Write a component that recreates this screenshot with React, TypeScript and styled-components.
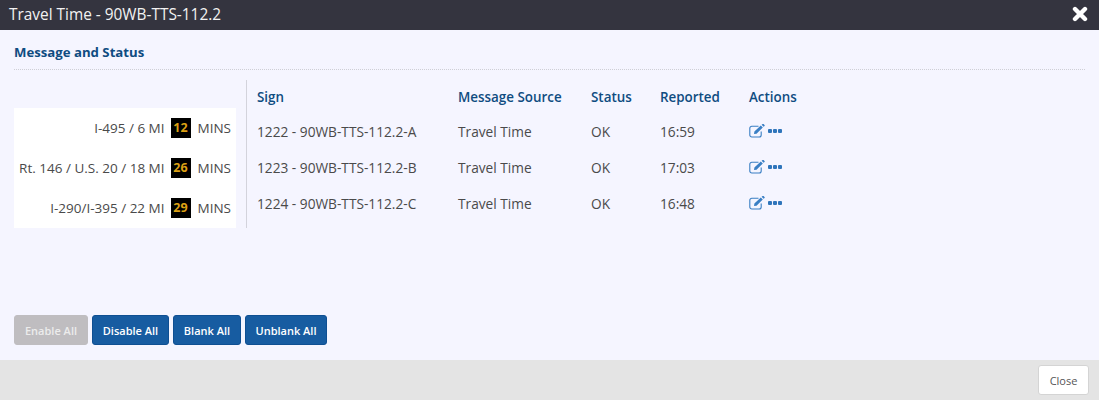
import React from "react";
import styled, { createGlobalStyle } from "styled-components";

const Global = createGlobalStyle`
  html, body { margin: 0; padding: 0; background: #f5f5ff; }
  body { font-family: "Open Sans", "Noto Sans", sans-serif; }
`;

const Modal = styled.div`
  width: 1099px;
  height: 400px;
  display: flex;
  flex-direction: column;
  overflow: hidden;
`;
const Header = styled.header`
  height: 30px;
  flex: none;
  background: #34343f;
  display: flex;
  align-items: center;
  justify-content: space-between;
  padding: 0 11px 0 9px;
  color: #f2f2f2;
  font-size: 15.4px;
  line-height: 30px;
`;
const CloseIcon = styled.svg`
  width: 16px;
  height: 16px;
  margin-bottom: 3px;
  color: #fff;
`;
const Body = styled.main`
  flex: 1;
  background: #f5f5ff;
  padding: 14px 14px 15px;
  display: flex;
  flex-direction: column;
`;
const SectionTitle = styled.h2`
  margin: 0;
  height: 25px;
  font-size: 13.2px;
  line-height: 17px;
  font-weight: 700;
  color: #0f4c81;
  border-bottom: 1px dotted #cfcfd6;
`;
const Content = styled.div`
  display: flex;
  margin-top: 10px;
  flex: 1;
  align-items: flex-start;
`;
const SignColumn = styled.div`
  width: 222px;
  margin-top: 28px;
  height: 120px;
  background: #fff;
  display: flex;
  flex-direction: column;
  justify-content: space-between;
`;
const SignLine = styled.div`
  height: 40px;
  display: flex;
  align-items: center;
  justify-content: flex-end;
  padding-right: 5px;
  font-size: 13.5px;
  color: #4a4a4a;
  white-space: nowrap;
`;
const Minutes = styled.span`
  width: 20px;
  height: 20px;
  margin: 0 7px 0 6px;
  background: #000;
  color: #dca114;
  font-weight: 700;
  font-size: 12.5px;
  line-height: 20px;
  text-align: center;
`;
const TableWrap = styled.div`
  margin-left: 10px;
  height: 148px;
  border-left: 1px solid #d3d3dc;
`;
const Table = styled.table`
  border-collapse: collapse;
  table-layout: fixed;
  width: 570px;
  font-size: 13.7px;
  color: #4a4a4a;
`;
const HeadCell = styled.th<{ $w: number }>`
  width: ${(p) => p.$w}px;
  height: 34px;
  padding: 0 0 0 10px;
  text-align: left;
  font-weight: 600;
  font-size: 13.4px;
  color: #0f4c81;
  box-sizing: border-box;
`;
const Cell = styled.td`
  height: 36px;
  box-sizing: border-box;
  padding: 0 0 2px 10px;
  white-space: nowrap;
`;
const Actions = styled.div`
  display: flex;
  align-items: center;
  gap: 3px;
  color: #3a7fc4;
`;
const EditIcon = styled.svg`
  width: 16px;
  height: 14px;
`;
const MoreIcon = styled.svg`
  width: 14px;
  height: 4px;
  margin-bottom: 1px;
  color: #2f75bb;
`;
const ButtonRow = styled.div`
  display: flex;
  gap: 4px;
`;
const Button = styled.button<{ $disabled?: boolean; $w: number }>`
  height: 30px;
  padding: 0;
  width: ${(p) => p.$w}px;
  border-radius: 3px;
  border: 1px solid ${(p) => (p.$disabled ? "#bfbdc0" : "#0f4f92")};
  background: ${(p) => (p.$disabled ? "#bfbdc0" : "#175ca1")};
  color: ${(p) => (p.$disabled ? "#ececec" : "#fff")};
  font-family: inherit;
  font-size: 11px;
  font-weight: 600;
`;
const Footer = styled.footer`
  height: 40px;
  flex: none;
  background: #e4e4e4;
  display: flex;
  justify-content: flex-end;
  align-items: center;
  padding: 0 10px;
`;
const CloseButton = styled.button`
  width: 51px;
  height: 30px;
  background: #fff;
  border: 1px solid #d4d4d4;
  border-radius: 3px;
  color: #555;
  font-family: inherit;
  font-size: 11px;
  padding: 0;
`;

const rows = [
  { label: "I-495 / 6 MI", min: "12", sign: "1222 - 90WB-TTS-112.2-A", time: "16:59" },
  { label: "Rt. 146 / U.S. 20 / 18 MI", min: "26", sign: "1223 - 90WB-TTS-112.2-B", time: "17:03" },
  { label: "I-290/I-395 / 22 MI", min: "29", sign: "1224 - 90WB-TTS-112.2-C", time: "16:48" },
];

export default function App() {
  return (
    <Modal>
      <Global />
      <Header>
        <span>Travel Time - 90WB-TTS-112.2</span>
        <CloseIcon viewBox="0 0 16 16">
          <path d="M3 3L13 13M13 3L3 13" stroke="currentColor" strokeWidth="4.4" strokeLinecap="round" />
        </CloseIcon>
      </Header>
      <Body>
        <SectionTitle>Message and Status</SectionTitle>
        <Content>
          <SignColumn>
            {rows.map((r) => (
              <SignLine key={r.sign}>
                {r.label}
                <Minutes>{r.min}</Minutes>
                MINS
              </SignLine>
            ))}
          </SignColumn>
          <TableWrap>
            <Table>
              <thead>
                <tr>
                  <HeadCell $w={201}>Sign</HeadCell>
                  <HeadCell $w={133}>Message Source</HeadCell>
                  <HeadCell $w={69}>Status</HeadCell>
                  <HeadCell $w={89}>Reported</HeadCell>
                  <HeadCell $w={78}>Actions</HeadCell>
                </tr>
              </thead>
              <tbody>
                {rows.map((r) => (
                  <tr key={r.sign}>
                    <Cell>{r.sign}</Cell>
                    <Cell>Travel Time</Cell>
                    <Cell>OK</Cell>
                    <Cell>{r.time}</Cell>
                    <Cell>
                      <Actions>
                        <EditIcon viewBox="0 0 16 14">
                          <path d="M9.5 2.2H2.8A2 2 0 0 0 .8 4.2V11a2 2 0 0 0 2 2h7.4a2 2 0 0 0 2-2V7.5" fill="none" stroke="currentColor" strokeWidth="1.1" />
                          <path d="M5 10l.4-2.5L11.8 1.4l2 2L7.5 9.7zM12.6.8l2 2 .9-.9a.7.7 0 0 0 0-1L14.6 0a.7.7 0 0 0-1 0z" fill="currentColor" />
                        </EditIcon>
                        <MoreIcon viewBox="0 0 14 4">
                          <rect x="0" y="0" width="4" height="4" rx="1" fill="currentColor" />
                          <rect x="5" y="0" width="4" height="4" rx="1" fill="currentColor" />
                          <rect x="10" y="0" width="4" height="4" rx="1" fill="currentColor" />
                        </MoreIcon>
                      </Actions>
                    </Cell>
                  </tr>
                ))}
              </tbody>
            </Table>
          </TableWrap>
        </Content>
        <ButtonRow>
          <Button $disabled $w={74}>Enable All</Button>
          <Button $w={77}>Disable All</Button>
          <Button $w={68}>Blank All</Button>
          <Button $w={82}>Unblank All</Button>
        </ButtonRow>
      </Body>
      <Footer>
        <CloseButton>Close</CloseButton>
      </Footer>
    </Modal>
  );
}
